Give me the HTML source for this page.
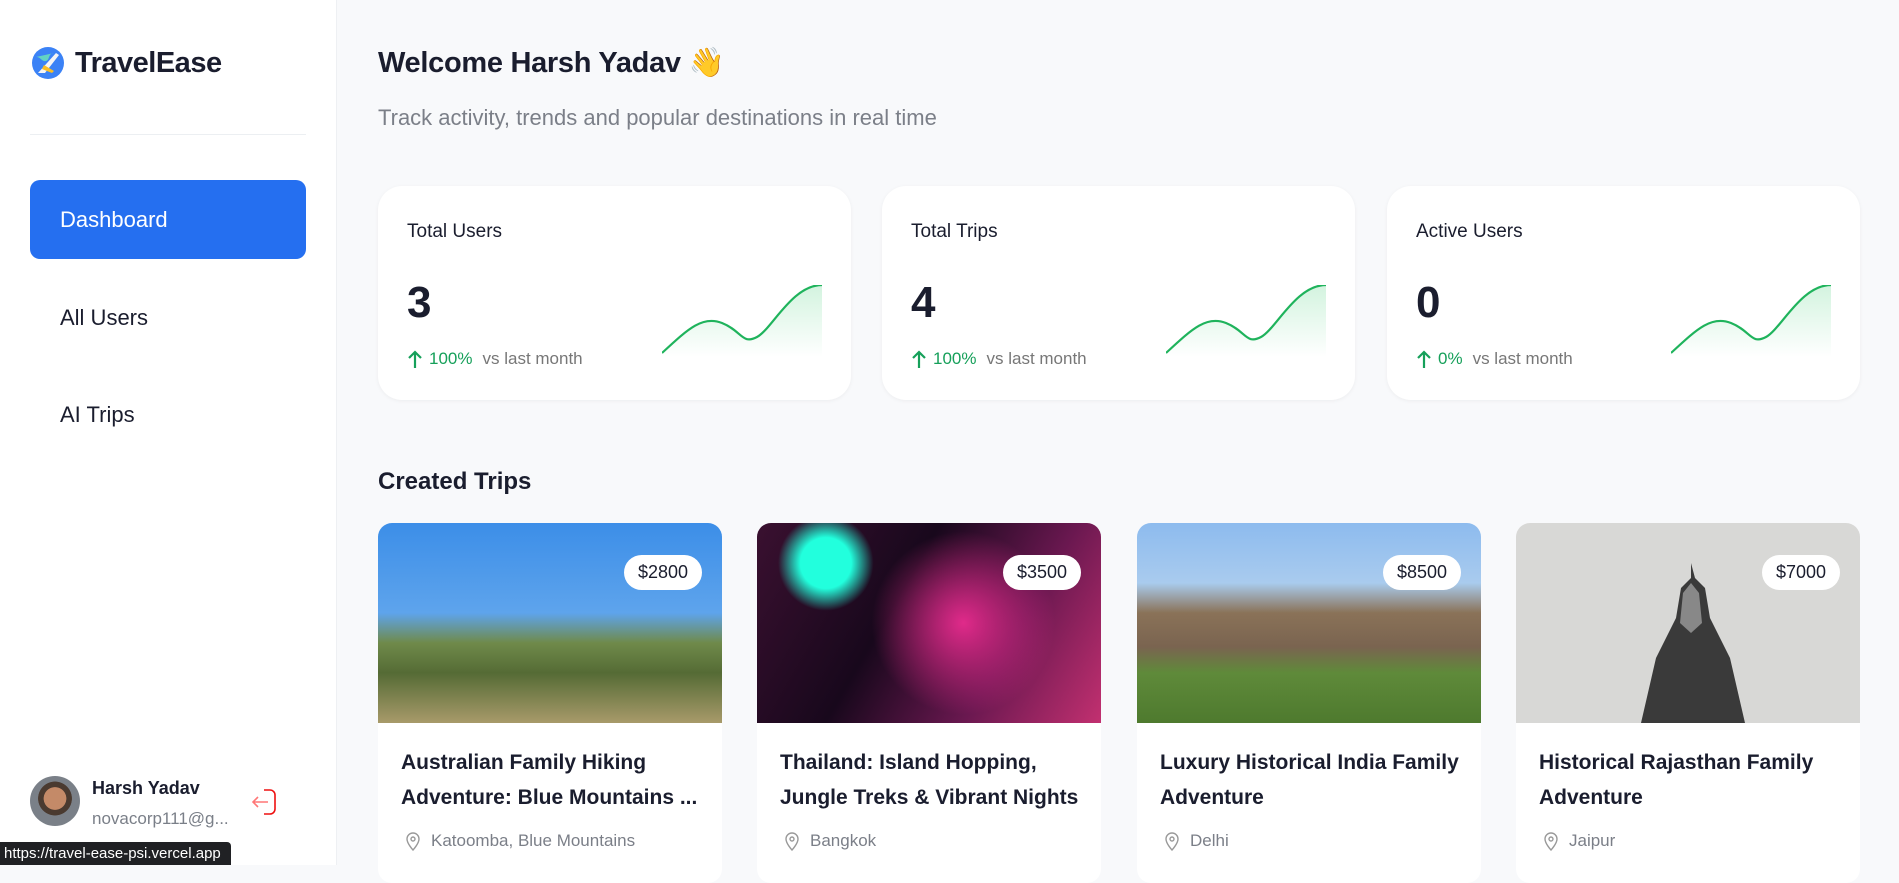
<!DOCTYPE html>
<html><head><meta charset="utf-8"><style>
*{box-sizing:border-box;margin:0;padding:0}
body{width:1899px;height:865px;overflow:hidden;background:#f8f9fb;font-family:"Liberation Sans",sans-serif;color:#1a1d2e;position:relative}
.side{position:absolute;left:0;top:0;width:337px;height:865px;background:#fff;border-right:1px solid #eef0f3}
.logo{position:absolute;left:30px;top:45px;display:flex;align-items:center}
.logo span{font-size:29px;font-weight:bold;margin-left:9px;letter-spacing:-0.5px}
.div{position:absolute;left:30px;top:134px;width:276px;height:1px;background:#eceff2}
.nav{position:absolute;left:30px;width:276px;height:79px;border-radius:10px;font-size:22px;padding-left:30px;line-height:79px;color:#1a1d2e}
.nav.act{background:#256ff0;color:#fff}
.user{position:absolute;left:30px;top:776px}
.av{width:50px;height:50px;border-radius:50%;background:radial-gradient(circle at 50% 45%,#c48a68 0 30%,#4a3a30 31% 45%,#7a8088 46%);position:absolute}
.name{position:absolute;left:62px;top:2px;font-weight:bold;font-size:18px;white-space:nowrap}
.mail{position:absolute;left:62px;top:33px;font-size:17px;color:#7a7f88;white-space:nowrap}
.tip{position:absolute;left:0;top:842px;width:231px;height:23px;background:#202124;color:#fff;font-size:15px;line-height:23px;padding-left:4px;border-radius:0 4px 0 0}
h1{position:absolute;left:378px;top:46px;font-size:29px;font-weight:bold;letter-spacing:-0.3px}
.sub{position:absolute;left:378px;top:105px;font-size:22px;color:#7b7f88}
.stat{position:absolute;top:186px;width:473px;height:214px;background:#fff;border-radius:24px;box-shadow:0 1px 4px rgba(0,0,0,.05)}
.stat .l{position:absolute;left:29px;top:35px;font-size:19px}
.stat .n{position:absolute;left:29px;top:92px;font-size:44px;font-weight:bold}
.stat .t{position:absolute;left:29px;top:163px;font-size:17px;color:#777;display:flex;align-items:center}
.stat .t b{color:#16a05a;font-weight:normal;margin-right:10px;margin-left:6px}
.stat svg.c{position:absolute;left:284px;top:99px}
h2{position:absolute;left:378px;top:468px;font-size:24px;font-weight:bold}
.trip{position:absolute;top:523px;width:344px;height:360px;background:#fff;border-radius:14px;overflow:hidden}
.img{height:200px;position:relative}
.price{position:absolute;right:20px;top:32px;background:#fff;border-radius:18px;padding:0 14px;height:35px;line-height:35px;font-size:18px}
.tt{position:absolute;left:23px;top:222px;font-size:21px;line-height:35px;font-weight:bold;white-space:nowrap}
.loc{position:absolute;left:27px;top:308px;font-size:17px;color:#7b7f88;display:flex;align-items:center;gap:10px}
</style></head><body>
<div class="side">
 <div class="logo"><svg width="36" height="36" viewBox="0 0 36 36"><circle cx="18" cy="18" r="16" fill="#3b82f6"/><path d="M6 12c5 0 6 5 10 4s2-8 8-8" fill="#6ee7b7" opacity=".8"/><path d="M8 28l18-20 3 2-14 18z" fill="#f5f5f5"/><path d="M14 20l10 6-2 2-10-4z" fill="#fbbf24"/></svg><span>TravelEase</span></div>
 <div class="div"></div>
 <div class="nav act" style="top:180px">Dashboard</div>
 <div class="nav" style="top:278px">All Users</div>
 <div class="nav" style="top:375px">AI Trips</div>
 <div class="user"><div class="av"></div><div class="name">Harsh Yadav</div><div class="mail">novacorp111@g...</div>
 <svg style="position:absolute;left:220px;top:11px" width="32" height="30" viewBox="0 0 32 30"><path d="M14 3h6a5 5 0 0 1 5 5v14a5 5 0 0 1-5 5h-6" fill="none" stroke="#e11" stroke-width="1.6"/><path d="M18 15H3M8 10l-5 5 5 5" fill="none" stroke="#f77" stroke-width="1.6"/></svg></div>
</div>
<div class="tip">https://travel-ease-psi.vercel.app</div>
<h1>Welcome Harsh Yadav 👋</h1>
<div class="sub">Track activity, trends and popular destinations in real time</div>

<svg width="0" height="0" style="position:absolute"><defs><linearGradient id="g" x1="0" y1="0" x2="0" y2="1"><stop offset="0" stop-color="#22c55e" stop-opacity=".2"/><stop offset="1" stop-color="#22c55e" stop-opacity="0"/></linearGradient></defs></svg>

<div class="stat" style="left:378px"><div class="l">Total Users</div><div class="n">3</div><div class="t"><svg width="16" height="20" viewBox="0 0 16 20"><path d="M8 19V3M2 9l6-6 6 6" fill="none" stroke="#16a05a" stroke-width="2.2"/></svg><b>100%</b>vs last month</div>
<svg class="c" width="160" height="72" viewBox="0 0 160 72"><path d="M0 68C25 45 40 30 60 38S80 60 95 52 130 0 160 0V72H0Z" fill="url(#g)"/><path d="M0 68C25 45 40 30 60 38S80 60 95 52 130 0 160 0" fill="none" stroke="#1fb35c" stroke-width="2.2"/></svg></div>
<div class="stat" style="left:882px"><div class="l">Total Trips</div><div class="n">4</div><div class="t"><svg width="16" height="20" viewBox="0 0 16 20"><path d="M8 19V3M2 9l6-6 6 6" fill="none" stroke="#16a05a" stroke-width="2.2"/></svg><b>100%</b>vs last month</div>
<svg class="c" width="160" height="72" viewBox="0 0 160 72"><path d="M0 68C25 45 40 30 60 38S80 60 95 52 130 0 160 0V72H0Z" fill="url(#g)"/><path d="M0 68C25 45 40 30 60 38S80 60 95 52 130 0 160 0" fill="none" stroke="#1fb35c" stroke-width="2.2"/></svg></div>
<div class="stat" style="left:1387px"><div class="l">Active Users</div><div class="n">0</div><div class="t"><svg width="16" height="20" viewBox="0 0 16 20"><path d="M8 19V3M2 9l6-6 6 6" fill="none" stroke="#16a05a" stroke-width="2.2"/></svg><b>0%</b>vs last month</div>
<svg class="c" width="160" height="72" viewBox="0 0 160 72"><path d="M0 68C25 45 40 30 60 38S80 60 95 52 130 0 160 0V72H0Z" fill="url(#g)"/><path d="M0 68C25 45 40 30 60 38S80 60 95 52 130 0 160 0" fill="none" stroke="#1fb35c" stroke-width="2.2"/></svg></div>

<h2>Created Trips</h2>

<div class="trip" style="left:378px"><div class="img" style="background:linear-gradient(180deg,#3c8ee8 0%,#5ea4ec 45%,#6f8a4a 60%,#556b35 75%,#a89a6a 100%)"><div class="price">$2800</div></div>
<div class="tt">Australian Family Hiking<br>Adventure: Blue Mountains ...</div>
<div class="loc"><svg width="16" height="20" viewBox="0 0 16 20"><path d="M8 19s6-6.5 6-11A6 6 0 0 0 2 8c0 4.5 6 11 6 11z" fill="none" stroke="#999" stroke-width="1.4"/><circle cx="8" cy="8" r="2" fill="none" stroke="#999" stroke-width="1.4"/></svg>Katoomba, Blue Mountains</div></div>

<div class="trip" style="left:757px"><div class="img" style="background:radial-gradient(circle at 20% 20%,#2fd 0 8%,transparent 15%),radial-gradient(circle at 60% 50%,#e02a8a 0,transparent 40%),linear-gradient(120deg,#3a1030,#18081c 40%,#6a1850 70%,#c23070)"><div class="price">$3500</div></div>
<div class="tt">Thailand: Island Hopping,<br>Jungle Treks &amp; Vibrant Nights</div>
<div class="loc"><svg width="16" height="20" viewBox="0 0 16 20"><path d="M8 19s6-6.5 6-11A6 6 0 0 0 2 8c0 4.5 6 11 6 11z" fill="none" stroke="#999" stroke-width="1.4"/><circle cx="8" cy="8" r="2" fill="none" stroke="#999" stroke-width="1.4"/></svg>Bangkok</div></div>

<div class="trip" style="left:1137px"><div class="img" style="background:linear-gradient(180deg,#8dbbee 0%,#a9cbee 30%,#8a7258 45%,#7a6450 62%,#5f8a3a 75%,#4e7a2e 100%)"><div class="price">$8500</div></div>
<div class="tt">Luxury Historical India Family<br>Adventure</div>
<div class="loc"><svg width="16" height="20" viewBox="0 0 16 20"><path d="M8 19s6-6.5 6-11A6 6 0 0 0 2 8c0 4.5 6 11 6 11z" fill="none" stroke="#999" stroke-width="1.4"/><circle cx="8" cy="8" r="2" fill="none" stroke="#999" stroke-width="1.4"/></svg>Delhi</div></div>

<div class="trip" style="left:1516px"><div class="img" style="background:#d8d8d6"><svg style="position:absolute;left:100px;top:40px" width="150" height="160" viewBox="0 0 150 160"><path d="M75 0l4 15 10 10 5 30 20 40 15 65H25l15-65 20-40 5-30 10-10z" fill="#3a3a3a"/><path d="M75 20l8 10 3 30-11 10-11-10 3-30z" fill="#888"/></svg><div class="price">$7000</div></div>
<div class="tt">Historical Rajasthan Family<br>Adventure</div>
<div class="loc"><svg width="16" height="20" viewBox="0 0 16 20"><path d="M8 19s6-6.5 6-11A6 6 0 0 0 2 8c0 4.5 6 11 6 11z" fill="none" stroke="#999" stroke-width="1.4"/><circle cx="8" cy="8" r="2" fill="none" stroke="#999" stroke-width="1.4"/></svg>Jaipur</div></div>
</body></html>
